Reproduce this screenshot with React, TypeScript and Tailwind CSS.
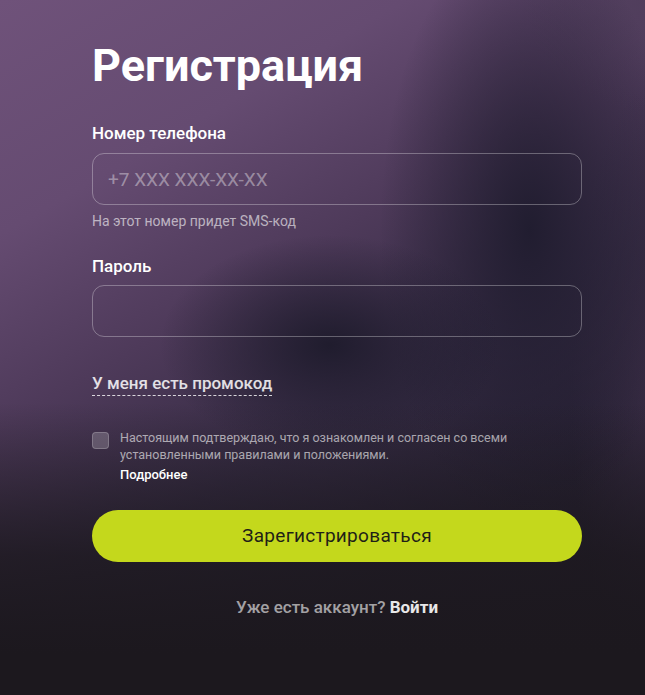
import { useState } from 'react';

export default function App() {
  const [phone, setPhone] = useState('');
  const [password, setPassword] = useState('');
  const [agree, setAgree] = useState(false);

  return (
    <div
      className="min-h-[695px] w-full font-['Roboto',sans-serif] text-white"
      style={{
        background: [
          'linear-gradient(180deg, rgba(28,24,30,0) 58%, rgba(28,24,30,0.8) 80%, #1c181e 94%)',
          'radial-gradient(ellipse 170px 110px at 330px 345px, rgba(30,27,44,0.95), rgba(30,27,44,0) 100%)',
          'radial-gradient(ellipse 150px 300px at 530px 230px, rgba(33,29,48,1), rgba(33,29,48,0) 100%)',
          'radial-gradient(ellipse 120px 110px at 645px 0px, rgba(80,62,92,0.9), rgba(80,62,92,0) 100%)',
          'radial-gradient(ellipse 90px 300px at 660px 380px, rgba(58,45,70,0.9), rgba(58,45,70,0) 100%)',
          'linear-gradient(150deg, #6f527a 0%, #654b71 22%, #4e3a5a 40%, #352b43 58%, #262032 75%, #1f1a26 100%)',
        ].join(', '),
      }}
    >
      <div className="ml-[92px] w-[490px] pt-[38px]">
        {/* Заголовок */}
        <h1 className="text-[45px] font-bold leading-[56px]">Регистрация</h1>

        {/* Телефон */}
        <label className="mt-[29px] block text-[17px] font-medium leading-5">Номер телефона</label>
        <input
          value={phone}
          onChange={(e) => setPhone(e.target.value)}
          placeholder="+7 XXX XXX-XX-XX"
          className="mt-[10px] block h-[52px] w-full rounded-[12px] border border-white/30 bg-transparent px-[15px] text-[19px] text-white placeholder:text-white/40 outline-none"
        />
        <p className="mt-[8px] text-[14px] leading-4 text-white/60">На этот номер придет SMS-код</p>

        {/* Пароль */}
        <label className="mt-[27px] block text-[17px] font-medium leading-5">Пароль</label>
        <input
          type="password"
          value={password}
          onChange={(e) => setPassword(e.target.value)}
          className="mt-[9px] block h-[52px] w-full rounded-[12px] border border-white/30 bg-transparent px-[15px] text-[20px] text-white outline-none"
        />

        {/* Промокод */}
        <div className="mt-[36px] leading-5">
          <span className="border-b border-dashed border-white/80 pb-[2px] text-[17px] font-medium leading-5 text-white/85">
            У меня есть промокод
          </span>
        </div>

        {/* Согласие */}
        <div className="mt-[35px] flex gap-[11px]">
          <button
            onClick={() => setAgree(!agree)}
            className="mt-[3px] h-[17px] w-[17px] shrink-0 rounded-[4px] border border-white/20 bg-white/20"
          />
          <div>
            <p className="text-[12.5px] leading-[17px] text-white/60">
              Настоящим подтверждаю, что я ознакомлен и согласен со всеми установленными правилами и положениями.
            </p>
            <a href="#" className="mt-[4px] block text-[13px] font-medium leading-4 text-white">
              Подробнее
            </a>
          </div>
        </div>

        {/* Кнопка */}
        <button className="mt-[27px] h-[52px] w-full rounded-full bg-[#c4d81c] text-[19px] tracking-[0.3px] text-[#1f1f17]">
          Зарегистрироваться
        </button>

        <p className="mt-[33px] text-center text-[17px] font-medium leading-6 text-white/60">
          Уже есть аккаунт? <a href="#" className="font-bold text-white/90">Войти</a>
        </p>
      </div>
    </div>
  );
}
